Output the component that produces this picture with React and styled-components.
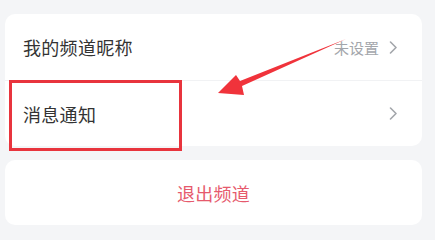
import React from 'react';
import styled, { createGlobalStyle } from 'styled-components';

const GlobalStyle = createGlobalStyle`
  html, body {
    margin: 0;
    padding: 0;
    background: #f4f5f7;
  }
  body {
    font-family: "Noto Sans CJK SC", "Noto Sans", sans-serif;
  }
`;

const Page = styled.div`
  position: relative;
  width: 435px;
  height: 236px;
  padding: 14px 13px 0 5px;
  box-sizing: border-box;
  display: flex;
  flex-direction: column;
  gap: 14px;
`;

const Card = styled.div`
  background: #ffffff;
  border-radius: 10px;
  overflow: hidden;
`;

const Row = styled.div`
  height: 66px;
  display: flex;
  align-items: center;
  padding: 0 24px 0 18px;
  border-top: ${(p) => (p.first ? 'none' : '1px solid #f1f2f4')};
  box-sizing: border-box;
`;

const Label = styled.div`
  flex: 1;
  font-size: 18px;
  color: #333333;
  letter-spacing: 0.3px;
`;

const Value = styled.span`
  font-size: 15px;
  color: #a3a6ab;
  margin-right: 10px;
`;

const ExitButton = styled.div`
  height: 65px;
  display: flex;
  align-items: center;
  justify-content: center;
  font-size: 18px;
  color: #e65a6d;
  letter-spacing: 0.3px;
`;

const Highlight = styled.div`
  position: absolute;
  left: 9px;
  top: 80px;
  width: 173px;
  height: 71px;
  border: 3px solid #e8343d;
  box-sizing: border-box;
`;

const ArrowLayer = styled.svg`
  position: absolute;
  left: 0;
  top: 0;
  pointer-events: none;
`;

function Chevron() {
  return (
    <svg width="9" height="13" viewBox="0 0 9 13">
      <path d="M1.5 1 L7 6.5 L1.5 12" fill="none" stroke="#a3a6ab" strokeWidth="1.6" strokeLinecap="round" strokeLinejoin="round" />
    </svg>
  );
}

export default function App() {
  return (
    <>
      <GlobalStyle />
      <Page>
        <Card>
          <Row first>
            <Label>我的频道昵称</Label>
            <Value>未设置</Value>
            <Chevron />
          </Row>
          <Row>
            <Label>消息通知</Label>
            <Chevron />
          </Row>
        </Card>
        <Card>
          <ExitButton>退出频道</ExitButton>
        </Card>
        <Highlight />
        <ArrowLayer width="435" height="236">
          <polygon points="346,39 240,81 236,75 218,93 244,95 242,86" fill="#f0333b" />
        </ArrowLayer>
      </Page>
    </>
  );
}
